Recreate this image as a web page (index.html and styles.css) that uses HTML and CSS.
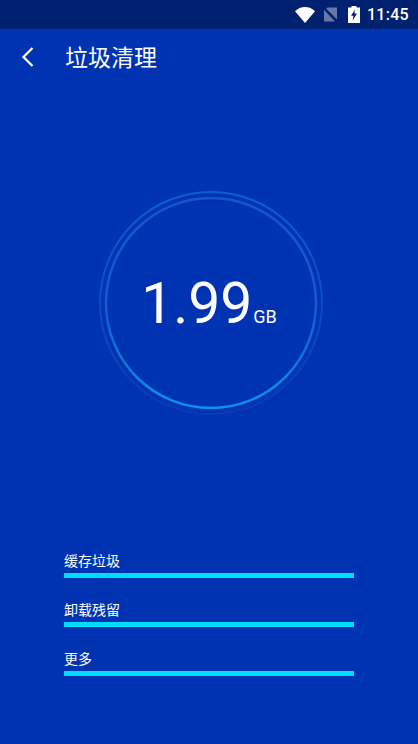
FILE: index.html
```html
<!DOCTYPE html>
<html lang="zh">
    <head>
        <meta charset="utf-8">
        <title>垃圾清理</title>
        <link rel="stylesheet" href="styles.css">
    </head>
    <body>
        <div class="statusbar">
            <svg class="wifi" width="20" height="16" viewBox="0 0 20 16">
                <path d="M0 4.2C2.7 1.6 6.2 0 10 0s7.3 1.6 10 4.2L10 16z" fill="#fff"/>
            </svg>
            <svg class="nosim" width="15" height="15" viewBox="0 0 15 15">
                <path d="M4.5 0.5H14V12.4L3.2 1.8zM1 2.8L12 14.5H1z" fill="#fff" fill-opacity="0.4"/>
            </svg>
            <svg class="battery" width="12" height="17" viewBox="0 0 12 17">
                <path d="M3.5 0h5v1.5H12V17H0V1.5h3.5z" fill="#fff"/>
                <path d="M7 3.5L3 9.8h2.4L4.6 14.5 9 7.6H6.4z" fill="#002070"/>
            </svg>
            <span class="time">11:45</span>
        </div>
        <div class="toolbar">
            <svg class="back" width="14" height="22" viewBox="0 0 14 22">
                <path d="M11.5 2L2.5 11l9 9" fill="none" stroke="#fff" stroke-width="2.2"/>
            </svg>
            <span class="title">垃圾清理</span>
        </div>
        <div class="gauge">
            <svg class="rings" width="230" height="230" viewBox="0 0 230 230">
                <defs>
                    <linearGradient id="innerRing" x1="0" y1="0" x2="0" y2="1">
                        <stop offset="0" stop-color="#1756c4"/>
                        <stop offset="0.55" stop-color="#0f60cc"/>
                        <stop offset="1" stop-color="#0a94ea"/>
                    </linearGradient>
                    <linearGradient id="outerRing" x1="0" y1="0" x2="0" y2="1">
                        <stop offset="0" stop-color="#0b60ce"/>
                        <stop offset="0.6" stop-color="#0c4abc"/>
                        <stop offset="1" stop-color="#0a3ab4"/>
                    </linearGradient>
                </defs>
                <circle cx="115" cy="115" r="111" fill="none" stroke="url(#outerRing)" stroke-width="2"/>
                <circle cx="115" cy="115" r="105" fill="none" stroke="url(#innerRing)" stroke-width="2.5"/>
            </svg>
            <div class="size">
                <span class="num">1.99</span><span class="unit">GB</span>
            </div>
        </div>
        <div class="list">
            <div class="row">
                <div class="label">缓存垃圾</div>
                <div class="bar"></div>
            </div>
            <div class="row">
                <div class="label">卸载残留</div>
                <div class="bar"></div>
            </div>
            <div class="row">
                <div class="label">更多</div>
                <div class="bar"></div>
            </div>
        </div>
    </body>
</html>
```

FILE: styles.css
```css
html, body {
    margin: 0;
    padding: 0;
}

body {
    width: 418px;
    height: 744px;
    overflow: hidden;
    background-color: #0033b2;
    color: #fff;
    font-family: Roboto, "Noto Sans CJK SC", sans-serif;
}

.statusbar {
    height: 29px;
    background-color: #002070;
    display: flex;
    align-items: center;
    justify-content: flex-end;
    padding-right: 9px;
    box-sizing: border-box;
}

.wifi {
    margin-right: 8px;
}

.nosim {
    margin-right: 10px;
}

.battery {
    margin-right: 7px;
}

.time {
    font-size: 16px;
    font-weight: 500;
    letter-spacing: 0.3px;
}

.toolbar {
    height: 56px;
    display: flex;
    align-items: center;
    padding-left: 21px;
    box-sizing: border-box;
}

.back {
    margin-right: 31px;
}

.title {
    font-size: 23px;
    line-height: 30px;
    margin-bottom: 3px;
    margin-left: -1px;
    font-family: "Noto Sans CJK SC", sans-serif;
}

.gauge {
    margin-top: 103px;
    margin-left: 96px;
    width: 230px;
    height: 230px;
    display: flex;
    align-items: center;
    justify-content: center;
    position: relative;
}

.rings {
    position: absolute;
    left: 0;
    top: 0;
    filter: blur(0.4px);
}

.size {
    display: flex;
    align-items: baseline;
    position: relative;
    margin-top: 1px;
    margin-right: 4px;
}

.num {
    font-size: 57px;
    line-height: 66px;
    margin-right: 1px;
}

.unit {
    font-size: 18px;
}

.list {
    margin-top: 133px;
    padding-left: 64px;
    display: flex;
    flex-direction: column;
    gap: 22px;
}

.label {
    font-size: 14px;
    line-height: 19px;
    font-family: "Noto Sans CJK SC", sans-serif;
}

.row {
    width: 290px;
}

.bar {
    height: 5px;
    margin-top: 3px;
    background-color: #00dcff;
}
```
